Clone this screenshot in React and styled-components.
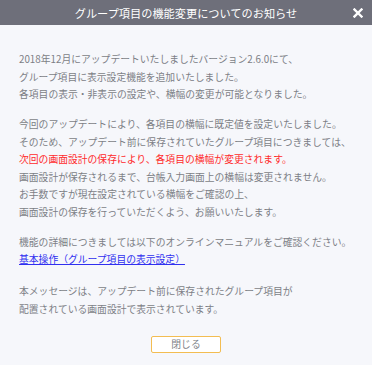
import React from 'react'
import styled, { createGlobalStyle } from 'styled-components'

const GlobalStyle = createGlobalStyle`
  html, body {
    margin: 0;
    padding: 0;
    background: #f6f7fb;
  }
  body {
    font-family: "Noto Sans CJK JP", "Noto Sans", sans-serif;
  }
`

const Dialog = styled.div`
  width: 372px;
  height: 365px;
  display: flex;
  flex-direction: column;
  background: #f6f7fb;
`

const Header = styled.div`
  position: relative;
  height: 25px;
  flex: none;
  background: #6e6f7a;
  color: #fff;
  display: flex;
  align-items: center;
  justify-content: center;
  font-size: 11.2px;
`

const CloseX = styled.span`
  position: absolute;
  right: 9px;
  top: 50%;
  transform: translateY(-50%);
  display: flex;
`

const Body = styled.div`
  padding: 26px 19px 0;
  display: flex;
  flex-direction: column;
  gap: 12.5px;
`

const Para = styled.p`
  margin: 0;
  margin-top: ${props => props.extra || 0}px;
  font-size: 9.8px;
  line-height: 17.5px;
  color: #7d7f86;
  white-space: nowrap;
`

const Line = styled.span`
  display: block;
  color: ${props => props.red ? '#ff2b2b' : 'inherit'};
`

const ManualLink = styled.a`
  display: block;
  color: #3030f0;
  text-decoration: underline;
`

const Footer = styled.div`
  display: flex;
  justify-content: center;
  padding-top: 18px;
`

const CloseButton = styled.button`
  width: 70px;
  height: 17px;
  padding: 0;
  background: #fff;
  border: 1px solid #f3bd52;
  border-radius: 2px;
  color: #7d7f86;
  font-family: inherit;
  font-size: 9.8px;
  line-height: 15px;
`

export default function App() {
  return (
    <>
      <GlobalStyle />
      <Dialog>
        <Header>
          グループ項目の機能変更についてのお知らせ
          <CloseX>
            <svg width="10" height="10" viewBox="0 0 10 10">
              <path d="M1.5 1.5 L8.5 8.5 M8.5 1.5 L1.5 8.5" stroke="#fff" strokeWidth="2.4" strokeLinecap="square" />
            </svg>
          </CloseX>
        </Header>
        <Body>
          <Para>
            <Line>2018年12月にアップデートいたしましたバージョン2.6.0にて、</Line>
            <Line>グループ項目に表示設定機能を追加いたしました。</Line>
            <Line>各項目の表示・非表示の設定や、横幅の変更が可能となりました。</Line>
          </Para>
          <Para>
            <Line>今回のアップデートにより、各項目の横幅に既定値を設定いたしました。</Line>
            <Line>そのため、アップデート前に保存されていたグループ項目につきましては、</Line>
            <Line red>次回の画面設計の保存により、各項目の横幅が変更されます。</Line>
            <Line>画面設計が保存されるまで、台帳入力画面上の横幅は変更されません。</Line>
            <Line>お手数ですが現在設定されている横幅をご確認の上、</Line>
            <Line>画面設計の保存を行っていただくよう、お願いいたします。</Line>
          </Para>
          <Para>
            <Line>機能の詳細につきましては以下のオンラインマニュアルをご確認ください。</Line>
            <ManualLink href="#">基本操作（グループ項目の表示設定）</ManualLink>
          </Para>
          <Para extra={2}>
            <Line>本メッセージは、アップデート前に保存されたグループ項目が</Line>
            <Line>配置されている画面設計で表示されています。</Line>
          </Para>
        </Body>
        <Footer>
          <CloseButton>閉じる</CloseButton>
        </Footer>
      </Dialog>
    </>
  )
}
